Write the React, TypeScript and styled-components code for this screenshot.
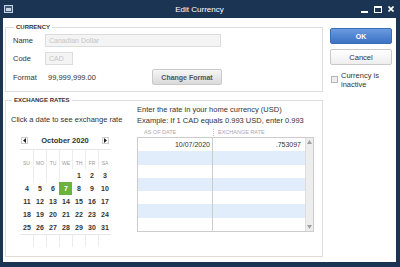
import styled, { createGlobalStyle } from 'styled-components';

const GlobalStyle = createGlobalStyle`
    body {
        margin: 0;
        font-family: 'Liberation Sans', Arial, sans-serif;
        color: #333333;
    }
    * {
        box-sizing: border-box;
    }
`;

const Window = styled.div`
    width: 400px;
    height: 267px;
    display: flex;
    flex-direction: column;
    background: #1c3453;
    padding: 0 4px 5px 3px;
`;

const TitleBar = styled.div`
    height: 18px;
    display: grid;
    grid-template-columns: 1fr auto 1fr;
    align-items: center;
    color: #ffffff;
`;

const Title = styled.div`
    font-size: 8px;
    padding-top: 1px;
`;

const Controls = styled.div`
    display: flex;
    justify-content: flex-end;
    align-items: center;
    gap: 6px;
    padding-right: 2px;
`;

const Body = styled.div`
    flex: 1;
    display: flex;
    gap: 7px;
    background: #ffffff;
    padding: 5px 4px 5px 2px;
`;

const Main = styled.div`
    width: 318px;
    display: flex;
    flex-direction: column;
    gap: 4px;
`;

const Group = styled.fieldset<{ $grow?: boolean }>`
    margin: 0;
    min-width: 0;
    border: 1px solid #dddddd;
    padding: ${p => (p.$grow ? '0 8px 6px 5px' : '3px 8px 6px 7px')};
    flex: ${p => (p.$grow ? 1 : 'none')};
`;

const Legend = styled.legend`
    font-size: 6px;
    font-weight: 700;
    color: #333333;
    padding: 0 2px;
    margin-left: 1px;
    line-height: 8px;
`;

const FieldRow = styled.div<{ $gap?: number }>`
    display: flex;
    align-items: center;
    margin-top: ${p => p.$gap ?? 0}px;
`;

const Label = styled.span`
    width: 32px;
    font-size: 7.5px;
    color: #333333;
`;

const Input = styled.div<{ $width: number }>`
    width: ${p => p.$width}px;
    height: 13px;
    border: 1px solid #dcdcdc;
    background: #f4f4f4;
    color: #c4c4c4;
    font-size: 7px;
    line-height: 11px;
    padding-left: 3px;
`;

const FormatValue = styled.span`
    width: 107px;
    padding-left: 3px;
    font-size: 7.5px;
    color: #333333;
`;

const GrayButton = styled.button<{ $width: number }>`
    width: ${p => p.$width}px;
    height: 16px;
    padding: 0;
    border: 1px solid #c9c9c9;
    border-radius: 2px;
    background: linear-gradient(#f6f6f6, #dadada);
    font-family: inherit;
    font-size: 7px;
    font-weight: 700;
    color: #555555;
`;

const Exchange = styled.div`
    display: flex;
    height: 100%;
`;

const CalendarSide = styled.div`
    width: 127px;
    padding-top: 10px;
`;

const Hint = styled.div`
    font-size: 7.5px;
    line-height: 11px;
    color: #333333;
    white-space: nowrap;
`;

const Calendar = styled.div`
    width: 91px;
    margin: 7px 0 0 9px;
`;

const MonthBar = styled.div`
    height: 16px;
    display: flex;
    align-items: center;
    justify-content: space-between;
    padding: 0 2px 0 1px;
`;

const Month = styled.span`
    font-size: 7.5px;
    font-weight: 700;
    color: #333333;
`;

const Arrow = styled.span`
    width: 7px;
    height: 7px;
    border: 1px solid #cccccc;
    display: flex;
    align-items: center;
    justify-content: center;
`;

const Days = styled.div`
    display: grid;
    grid-template-columns: repeat(7, 13px);
    border-top: 1px solid #e6e6e6;
    margin-top: 1px;
`;

const DayHead = styled.div`
    height: 19px;
    padding-bottom: 3px;
    display: flex;
    align-items: flex-end;
    justify-content: center;
    font-size: 5px;
    color: #9a9a9a;
    border-left: 1px solid #ececec;
    &:first-child {
        border-left: none;
    }
`;

const Day = styled.div<{ $selected?: boolean; $empty?: boolean; $first?: boolean; $topLine?: boolean }>`
    height: 13px;
    display: flex;
    align-items: center;
    justify-content: center;
    font-size: 7px;
    font-weight: 700;
    color: ${p => (p.$selected ? '#ffffff' : '#333333')};
    background: ${p => (p.$selected ? '#6cb33e' : 'transparent')};
    border-left: ${p => (p.$empty && !p.$first ? '1px solid #ececec' : '1px solid transparent')};
    border-top: ${p => (p.$topLine ? '1px solid #e6e6e6' : 'none')};
`;

const RateSide = styled.div`
    flex: 1;
`;

const ColumnHeads = styled.div`
    display: grid;
    grid-template-columns: 76px 1fr;
    height: 10px;
    margin-top: 1px;
    font-size: 5.5px;
    color: #aaaaaa;
    align-items: center;
`;

const ColumnHead = styled.span<{ $divider?: boolean }>`
    padding-left: ${p => (p.$divider ? 4 : 7)}px;
    border-left: ${p => (p.$divider ? '1px dotted #bbbbbb' : 'none')};
    line-height: 7px;
`;

const Table = styled.div`
    width: 177px;
    height: 95px;
    border: 1px solid #cccccc;
    display: flex;
`;

const Rows = styled.div`
    flex: 1;
    display: flex;
    flex-direction: column;
`;

const Row = styled.div<{ $alt: boolean }>`
    flex: 1;
    display: grid;
    grid-template-columns: 75px 1fr;
    background: ${p => (p.$alt ? '#e2edfc' : '#ffffff')};
    font-size: 7px;
    color: #333333;
`;

const Cell = styled.div<{ $first?: boolean }>`
    display: flex;
    align-items: center;
    justify-content: flex-end;
    padding-right: ${p => (p.$first ? 2 : 4)}px;
    border-right: ${p => (p.$first ? '1px solid #cccccc' : 'none')};
`;

const Scrollbar = styled.div`
    width: 8px;
    background: #ededed;
    border-left: 1px solid #dddddd;
    display: flex;
    flex-direction: column;
    justify-content: space-between;
    align-items: center;
    padding: 2px 0;
`;

const Side = styled.div`
    width: 62px;
    display: flex;
    flex-direction: column;
    padding-top: 5px;
`;

const OkButton = styled.button`
    height: 16px;
    padding: 0;
    border: 1px solid #3b6cb8;
    border-radius: 2px;
    background: linear-gradient(#6a9be0, #3d72c4);
    font-family: inherit;
    font-size: 7px;
    font-weight: 700;
    color: #ffffff;
`;

const CancelButton = styled(GrayButton)`
    margin-top: 5px;
    font-size: 7.5px;
    font-weight: 400;
    background: linear-gradient(#ffffff, #eeeeee);
    color: #333333;
`;

const CheckRow = styled.label`
    display: flex;
    align-items: flex-start;
    gap: 3px;
    margin-top: 6px;
    padding-left: 1px;
    font-size: 7.5px;
    line-height: 9px;
    color: #333333;
`;

const Box = styled.span`
    width: 7px;
    height: 7px;
    margin-top: 5px;
    flex: none;
    border: 1px solid #b5b5b5;
    background: #eeeeee;
`;

const weeks: (number | null)[][] = [
    [null, null, null, null, 1, 2, 3],
    [4, 5, 6, 7, 8, 9, 10],
    [11, 12, 13, 14, 15, 16, 17],
    [18, 19, 20, 21, 22, 23, 24],
    [25, 26, 27, 28, 29, 30, 31],
    [null, null, null, null, null, null, null],
];

const rates = [{ date: '10/07/2020', rate: '.753097' }];

const App = () => (
    <>
        <GlobalStyle />
        <Window>
            <TitleBar>
                <svg width="9" height="8" viewBox="0 0 9 8" style={{ marginLeft: 1 }}>
                    <rect x="0.5" y="0.5" width="8" height="7" fill="#3d5878" stroke="#c9d4e2" />
                    <rect x="2" y="3" width="5" height="3" fill="#c9d4e2" />
                </svg>
                <Title>Edit Currency</Title>
                <Controls>
                    <svg width="7" height="8" viewBox="0 0 7 8">
                        <rect x="0" y="6" width="7" height="2" fill="#ffffff" />
                    </svg>
                    <svg width="8" height="7" viewBox="0 0 8 7">
                        <rect x="0.5" y="0.5" width="7" height="6" fill="none" stroke="#ffffff" />
                        <rect x="0" y="0" width="8" height="2" fill="#ffffff" />
                    </svg>
                    <svg width="6" height="6" viewBox="0 0 6 6">
                        <path d="M0.5 0.5 L5.5 5.5 M5.5 0.5 L0.5 5.5" stroke="#ffffff" strokeWidth="1.6" />
                    </svg>
                </Controls>
            </TitleBar>
            <Body>
                <Main>
                    <Group>
                        <Legend>CURRENCY</Legend>
                        <FieldRow>
                            <Label>Name</Label>
                            <Input $width={176}>Canadian Dollar</Input>
                        </FieldRow>
                        <FieldRow $gap={5}>
                            <Label>Code</Label>
                            <Input $width={28}>CAD</Input>
                        </FieldRow>
                        <FieldRow $gap={4}>
                            <Label>Format</Label>
                            <FormatValue>99,999,999.00</FormatValue>
                            <GrayButton $width={70}>Change Format</GrayButton>
                        </FieldRow>
                    </Group>
                    <Group $grow>
                        <Legend>EXCHANGE RATES</Legend>
                        <Exchange>
                            <CalendarSide>
                                <Hint>Click a date to see exchange rate</Hint>
                                <Calendar>
                                    <MonthBar>
                                        <Arrow>
                                            <svg width="3" height="5" viewBox="0 0 3 5">
                                                <path d="M3 0 L0 2.5 L3 5 Z" fill="#222222" />
                                            </svg>
                                        </Arrow>
                                        <Month>October 2020</Month>
                                        <Arrow>
                                            <svg width="3" height="5" viewBox="0 0 3 5">
                                                <path d="M0 0 L3 2.5 L0 5 Z" fill="#222222" />
                                            </svg>
                                        </Arrow>
                                    </MonthBar>
                                    <Days>
                                        {['SU', 'MO', 'TU', 'WE', 'TH', 'FR', 'SA'].map(d => (
                                            <DayHead key={d}>{d}</DayHead>
                                        ))}
                                        {weeks.map((week, wi) =>
                                            week.map((day, di) => (
                                                <Day
                                                    key={`${wi}-${di}`}
                                                    $empty={day === null}
                                                    $first={di === 0}
                                                    $selected={day === 7}
                                                    $topLine={wi === weeks.length - 1}
                                                >
                                                    {day}
                                                </Day>
                                            ))
                                        )}
                                    </Days>
                                </Calendar>
                            </CalendarSide>
                            <RateSide>
                                <Hint>Enter the rate in your home currency (USD)</Hint>
                                <Hint>Example: If 1 CAD equals 0.993 USD, enter 0.993</Hint>
                                <ColumnHeads>
                                    <ColumnHead>AS OF DATE</ColumnHead>
                                    <ColumnHead $divider>EXCHANGE RATE</ColumnHead>
                                </ColumnHeads>
                                <Table>
                                    <Rows>
                                        {Array.from({ length: 7 }).map((_, i) => (
                                            <Row key={i} $alt={i % 2 === 1}>
                                                <Cell $first>{rates[i]?.date}</Cell>
                                                <Cell>{rates[i]?.rate}</Cell>
                                            </Row>
                                        ))}
                                    </Rows>
                                    <Scrollbar>
                                        <svg width="5" height="4" viewBox="0 0 5 4">
                                            <path d="M0 4 L2.5 0 L5 4 Z" fill="#a0a0a0" />
                                        </svg>
                                        <svg width="5" height="4" viewBox="0 0 5 4">
                                            <path d="M0 0 L2.5 4 L5 0 Z" fill="#a0a0a0" />
                                        </svg>
                                    </Scrollbar>
                                </Table>
                            </RateSide>
                        </Exchange>
                    </Group>
                </Main>
                <Side>
                    <OkButton>OK</OkButton>
                    <CancelButton $width={62}>Cancel</CancelButton>
                    <CheckRow>
                        <Box />
                        <span>
                            Currency is
                            <br />
                            inactive
                        </span>
                    </CheckRow>
                </Side>
            </Body>
        </Window>
    </>
);

export default App;
